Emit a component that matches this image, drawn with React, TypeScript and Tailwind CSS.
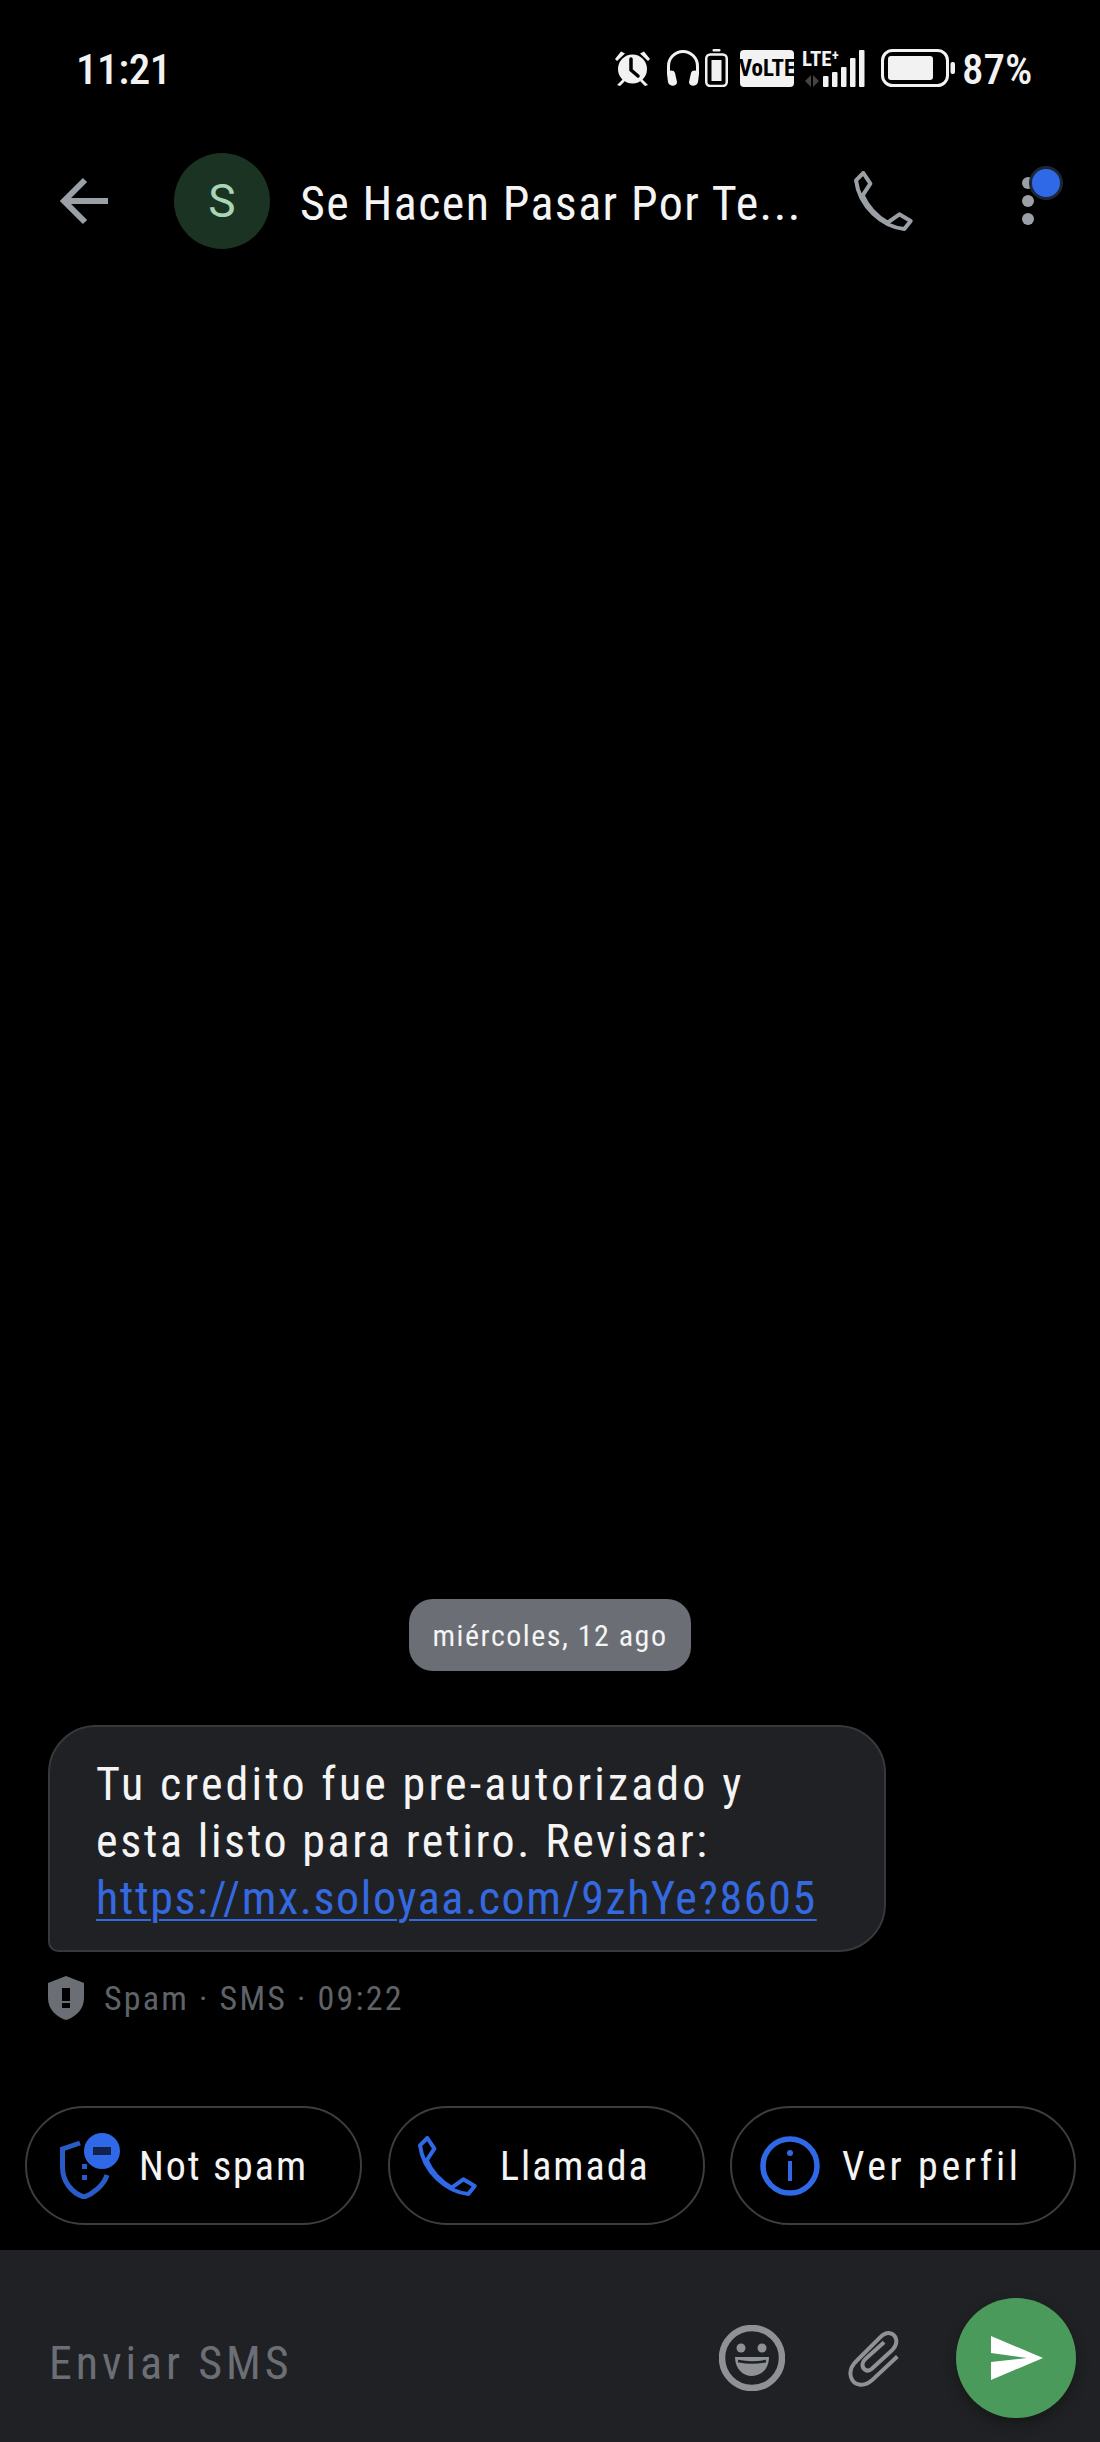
const font = "font-['Roboto_Condensed','Roboto',sans-serif]";

const PHONE =
  "M72 68 L93 100 L70 135 C85 170 115 200 145 217 L180 192 L214 212 L195 236 C130 230 60 170 50 90 Z";

const StatusBar = () => (
  <div className={`mt-[49px] flex h-[38px] items-center justify-between pl-[76px] pr-[68px] text-[#f2f2f2] ${font}`}>
    <span className="pt-[2px] text-[43px] font-medium leading-none tracking-[-0.4px]">11:21</span>
    <div className="flex items-center">
      {/* alarma */}
      <svg viewBox="0 0 39 38" className="h-[38px] w-[39px]" fill="#f2f2f2">
        <circle cx="19.5" cy="20" r="14.5" />
        <path d="M2 10 L8 2.5 L12 4.5 L4 12 Z M37 10 L31 2.5 L27 4.5 L35 12 Z M4 36 L10 30 L12 32 L7 37 Z M35 36 L29 30 L27 32 L32 37 Z" />
        <path d="M18 10 V21 L25 27" stroke="#000" strokeWidth="3.5" fill="none" strokeLinecap="round" />
      </svg>
      {/* auriculares */}
      <svg viewBox="0 0 34 38" className="ml-[14px] h-[38px] w-[34px]" fill="none">
        <path d="M2.5 25 V17 A14.5 14.5 0 0 1 31.5 17 V25" stroke="#f2f2f2" strokeWidth="3" />
        <path d="M1 25 C1 21 8 20 9 24 L11 33 C11 38 3 38 2 33 Z M33 25 C33 21 26 20 25 24 L23 33 C23 38 31 38 32 33 Z" fill="#f2f2f2" />
      </svg>
      {/* bateria auriculares */}
      <svg viewBox="0 0 23 38" className="ml-[5px] h-[38px] w-[23px]" fill="none">
        <rect x="7.5" y="0" width="8" height="2.5" rx="1" fill="#f2f2f2" />
        <rect x="1.25" y="5.5" width="20.5" height="31.5" rx="4" stroke="#f2f2f2" strokeWidth="2.5" />
        <rect x="6.5" y="11" width="10" height="21" fill="#f2f2f2" />
      </svg>
      <span className="ml-[12px] flex h-[37px] w-[54px] items-center justify-center rounded-[4px] bg-[#f2f2f2] text-[23px] font-bold leading-none text-black">
        VoLTE
      </span>
      <div className="relative ml-[8px] h-[38px] w-[64px]">
        <span className="absolute left-0 top-0 text-[21px] font-bold leading-none">LTE⁺</span>
        <svg viewBox="0 0 64 38" className="h-[38px] w-[64px]" fill="#f2f2f2">
          <path d="M3 32 L9 26 V38 Z M11 26 L17 32 L11 38 Z" fill="#444" />
          <rect x="21" y="27" width="5.5" height="11" rx="1" />
          <rect x="30" y="23" width="5.5" height="15" rx="1" />
          <rect x="39" y="18" width="5.5" height="20" rx="1" />
          <rect x="48" y="9" width="5.5" height="29" rx="1" />
          <rect x="57" y="1" width="5.5" height="37" rx="1" />
        </svg>
      </div>
      {/* bateria */}
      <svg viewBox="0 0 74 38" className="ml-[15px] h-[38px] w-[74px]" fill="none">
        <rect x="1.5" y="1.5" width="65" height="35" rx="10" stroke="#f2f2f2" strokeWidth="3" />
        <rect x="7" y="7" width="45" height="24" rx="3" fill="#f2f2f2" />
        <rect x="69.5" y="13" width="4.5" height="12" rx="2" fill="#f2f2f2" />
      </svg>
      <span className="ml-[7px] w-[70px] whitespace-nowrap pt-[2px] text-[43px] font-medium leading-none">87%</span>
    </div>
  </div>
);

const Header = () => (
  <div className={`mt-[66px] flex h-[96px] items-center ${font}`}>
    <svg viewBox="0 0 48 48" className="ml-[60px] h-[48px] w-[48px]" fill="none" stroke="#9aa0a6" strokeWidth="6">
      <path d="M48 24 H4 M25 3 L4 24 L25 45" />
    </svg>
    <div className="ml-[66px] flex h-[96px] w-[96px] items-center justify-center rounded-full bg-[#1a3322] font-['Roboto',sans-serif] text-[46px] leading-none text-[#a8d5b5]">
      S
    </div>
    <span className="ml-[30px] w-[510px] whitespace-nowrap pt-[6px] text-[48px] leading-none tracking-[1.4px] text-[#f4f4f4]">
      Se Hacen Pasar Por Te...
    </span>
    <svg viewBox="42 62 178 180" className="ml-[43px] h-[60px] w-[60px]" fill="none" stroke="#9aa0a6" strokeWidth="12" strokeLinejoin="round">
      <path d={PHONE} />
    </svg>
    <div className="relative ml-[109px] flex h-[48px] w-[12px] flex-col items-center justify-between">
      <span className="h-[12px] w-[12px] rounded-full bg-[#9aa0a6]" />
      <span className="h-[12px] w-[12px] rounded-full bg-[#9aa0a6]" />
      <span className="h-[12px] w-[12px] rounded-full bg-[#9aa0a6]" />
      <span className="absolute -top-[11px] left-[7px] h-[34px] w-[34px] rounded-full border-[3px] border-[#1d2733] bg-[#3069e8]" />
    </div>
  </div>
);

const Message = () => (
  <div className={font}>
    <div className="flex justify-center">
      <div className="flex h-[72px] w-[282px] items-center justify-center rounded-[24px] bg-[#6b6e75] text-[30px] tracking-[1.5px] text-[#f4f4f4]">
        miércoles, 12 ago
      </div>
    </div>
    <div className="ml-[48px] mt-[54px] h-[227px] w-[838px] rounded-[48px] rounded-bl-[10px] border-2 border-[#37383b] bg-[#202124] pl-[46px] pt-[29px] text-[46px] leading-[57px] text-[#f4f4f4]">
      <p className="tracking-[3.1px]">Tu credito fue pre-autorizado y</p>
      <p className="tracking-[2.6px]">esta listo para retiro. Revisar:</p>
      <p className="tracking-[1.6px] text-[#3469e0] underline decoration-2 underline-offset-[5px]">https://mx.soloyaa.com/9zhYe?8605</p>
    </div>
    <div className="ml-[48px] mt-[24px] flex h-[44px] items-center">
      <svg viewBox="0 0 36 44" className="h-[44px] w-[36px]">
        <path d="M18 0 L36 7 V22 C36 33 28 41 18 44 C8 41 0 33 0 22 V7 Z" fill="#6b6e75" />
        <rect x="14" y="12" width="8" height="13" fill="#000" />
        <rect x="14" y="27" width="8" height="5" fill="#000" />
      </svg>
      <span className="ml-[20px] text-[34px] leading-none tracking-[2.2px] text-[#5f6368]">Spam · SMS · 09:22</span>
    </div>
  </div>
);

const Chips = () => (
  <div className={`mt-[86px] flex h-[119px] pl-[25px] text-[40px] leading-none text-[#f4f4f4] ${font}`}>
    <div className="flex h-full w-[337px] items-center rounded-full border-2 border-[#3c3d3f] pl-[33px]">
      <svg viewBox="0 0 60 66" className="h-[66px] w-[60px] shrink-0" fill="none">
        <path d="M20 10 L2.5 16 V34 C2.5 49 12 60 24 64 C33 61 44 52 47 42" stroke="#2a5cc8" strokeWidth="5" />
        <rect x="22" y="31" width="5" height="5" fill="#2a5cc8" />
        <rect x="22" y="42" width="5" height="5" fill="#2a5cc8" />
        <circle cx="42" cy="18" r="18" fill="#3069e8" />
        <rect x="33" y="14" width="18" height="8" fill="#12224a" />
      </svg>
      <span className="ml-[19px] pt-[2px] tracking-[2px]">Not spam</span>
    </div>
    <div className="ml-[26px] flex h-full w-[317px] items-center rounded-full border-2 border-[#3c3d3f] pl-[27px]">
      <svg viewBox="42 62 178 180" className="h-[60px] w-[60px] shrink-0" fill="none" stroke="#3069e8" strokeWidth="12" strokeLinejoin="round">
        <path d={PHONE} />
      </svg>
      <span className="ml-[23px] pt-[2px] tracking-[2px]">Llamada</span>
    </div>
    <div className="ml-[25px] flex h-full w-[346px] items-center rounded-full border-2 border-[#3c3d3f] pl-[28px]">
      <svg viewBox="0 0 60 60" className="h-[60px] w-[60px] shrink-0" fill="none">
        <circle cx="30" cy="30" r="27" stroke="#3069e8" strokeWidth="5.5" />
        <circle cx="30" cy="17" r="3" fill="#3069e8" />
        <rect x="28" y="25" width="4" height="20" fill="#3069e8" />
      </svg>
      <span className="ml-[22px] pt-[2px] tracking-[3.6px]">Ver perfil</span>
    </div>
  </div>
);

const Composer = () => (
  <div className={`mt-[25px] flex h-[192px] items-center bg-[#202124] pt-[24px] ${font}`}>
    <span className="ml-[49px] w-[670px] pt-[10px] text-[46px] leading-none tracking-[3.9px] text-[#6b6e75]">Enviar SMS</span>
    <svg viewBox="0 0 66 66" className="h-[66px] w-[66px] shrink-0" fill="none">
      <circle cx="33" cy="33" r="30" stroke="#8e9196" strokeWidth="6.5" />
      <circle cx="22" cy="23" r="4.5" fill="#8e9196" />
      <circle cx="43" cy="23" r="4.5" fill="#8e9196" />
      <path d="M16 32 H50 C50 44 42 51 33 51 C24 51 16 44 16 32 Z" fill="#8e9196" />
      <path d="M19 36 Q33 39 47 36" stroke="#202124" strokeWidth="2.5" />
    </svg>
    <svg viewBox="470 145 160 178" className="ml-[62px] h-[59px] w-[53px] shrink-0" fill="none" stroke="#8e9196" strokeWidth="12">
      <path d="M622 228 L545 300 C520 322 490 315 482 290 C476 270 484 255 500 240 L570 170 C590 150 612 155 618 175 C622 190 615 200 605 210 L545 265 C530 278 515 265 517 250 C518 243 522 238 528 233 L582 185" />
    </svg>
    <div className="ml-[56px] flex h-[120px] w-[120px] shrink-0 items-center justify-center rounded-full bg-[#4a9a5c] shadow-[0_6px_14px_rgba(0,0,0,0.3)]">
      <svg viewBox="0 0 52 44" className="ml-[1px] h-[44px] w-[52px]" fill="#fff">
        <path d="M0 0 L52 22 L0 44 V26 L36 22 L0 17 Z" />
      </svg>
    </div>
  </div>
);

export default function App() {
  return (
    <div className="flex h-[2442px] w-[1100px] flex-col overflow-hidden bg-black">
      <StatusBar />
      <Header />
      <div className="flex-1" />
      <Message />
      <Chips />
      <Composer />
    </div>
  );
}
